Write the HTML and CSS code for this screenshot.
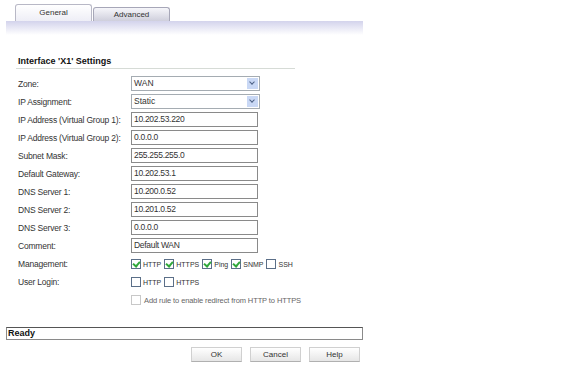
FILE: index.html
```html
<!DOCTYPE html>
<html lang="en">
<head>
    <meta charset="UTF-8">
    <title>Interface Settings</title>
    <link rel="stylesheet" href="styles.css">
</head>
<body>
    <div class="page">
        <div class="tabs">
            <div class="tab active">General</div>
            <div class="tab">Advanced</div>
        </div>
        <div class="band"></div>

        <div class="section">
            <h3>Interface 'X1' Settings</h3>
            <div class="form">
                <label>Zone:</label>
                <div class="select"><span>WAN</span><i class="arrow"></i></div>

                <label>IP Assignment:</label>
                <div class="select"><span>Static</span><i class="arrow"></i></div>

                <label>IP Address (Virtual Group 1):</label>
                <div class="field">10.202.53.220</div>

                <label>IP Address (Virtual Group 2):</label>
                <div class="field">0.0.0.0</div>

                <label>Subnet Mask:</label>
                <div class="field">255.255.255.0</div>

                <label>Default Gateway:</label>
                <div class="field">10.202.53.1</div>

                <label>DNS Server 1:</label>
                <div class="field">10.200.0.52</div>

                <label>DNS Server 2:</label>
                <div class="field">10.201.0.52</div>

                <label>DNS Server 3:</label>
                <div class="field">0.0.0.0</div>

                <label>Comment:</label>
                <div class="field">Default WAN</div>

                <label>Management:</label>
                <div class="checks">
                    <span class="check on"></span><span class="opt">HTTP</span>
                    <span class="check on"></span><span class="opt">HTTPS</span>
                    <span class="check on"></span><span class="opt">Ping</span>
                    <span class="check on"></span><span class="opt">SNMP</span>
                    <span class="check"></span><span class="opt">SSH</span>
                </div>

                <label>User Login:</label>
                <div class="checks">
                    <span class="check"></span><span class="opt">HTTP</span>
                    <span class="check"></span><span class="opt">HTTPS</span>
                </div>

                <label></label>
                <div class="checks disabled">
                    <span class="check"></span><span class="note">Add rule to enable redirect from HTTP to HTTPS</span>
                </div>
            </div>
        </div>

        <div class="status">Ready</div>
        <div class="buttons">
            <button>OK</button>
            <button>Cancel</button>
            <button>Help</button>
        </div>
    </div>
</body>
</html>
```

FILE: styles.css
```css
body {
    margin: 0;
    background-color: white;
    font-family: "Liberation Sans", Arial, sans-serif;
    font-size: 9px;
    color: #222;
}

.page {
    width: 357px;
    padding: 4px 0 0 6px;
}

.tabs {
    display: flex;
    align-items: flex-end;
    padding-left: 9px;
    height: 17px;
}

.tab {
    width: 75px;
    height: 13px;
    line-height: 13px;
    text-align: center;
    font-size: 8px;
    color: #333;
    border: 1px solid #a7a7b8;
    border-bottom: none;
    border-radius: 3px 3px 0 0;
    background: linear-gradient(#f6f6fa, #cfcfdc);
    margin-right: 1px;
}

.tab.active {
    height: 16px;
    line-height: 16px;
    background: linear-gradient(#ffffff, #eeeef6);
    border-color: #b8b8c6;
}

.band {
    height: 14px;
    background: linear-gradient(#d3d3ec, #ffffff);
}

.section {
    padding: 21px 0 0 10px;
}

h3 {
    margin: 0;
    width: 277px;
    font-size: 9px;
    font-weight: bold;
    color: #111;
    padding-bottom: 2px;
    border-bottom: 1px solid #d6dbd6;
    padding-left: 2px;
}

.form {
    display: grid;
    grid-template-columns: 113px 220px;
    grid-auto-rows: 18px;
    margin-top: 6px;
    padding-left: 2px;
}

.form label {
    display: flex;
    align-items: center;
    white-space: nowrap;
    font-size: 8.5px;
    letter-spacing: -0.2px;
    color: #333;
}

.field, .select {
    box-sizing: border-box;
    height: 15px;
    margin-top: 1px;
    width: 127px;
    border: 1px solid #8a8a8a;
    padding: 0 2px;
    line-height: 13px;
    font-size: 8.5px;
    letter-spacing: -0.3px;
    color: #333;
}

.select {
    width: 129px;
    display: flex;
    justify-content: space-between;
    border-color: #a5acb2;
    padding-right: 1px;
    letter-spacing: 0;
}

.arrow {
    width: 11px;
    height: 11px;
    margin-top: 1px;
    background: #c9d8f5;
    position: relative;
}

.arrow::after {
    content: "";
    position: absolute;
    left: 3px;
    top: 2px;
    width: 3px;
    height: 3px;
    border-right: 1px solid #4d6185;
    border-bottom: 1px solid #4d6185;
    transform: rotate(45deg);
}

.checks {
    display: flex;
    align-items: center;
    white-space: nowrap;
}

.check {
    flex-shrink: 0;
    box-sizing: border-box;
    width: 10px;
    height: 10px;
    border: 1px solid #5b6f88;
    background: white;
    position: relative;
}

.check.on::after {
    content: "";
    position: absolute;
    left: 2px;
    top: 0;
    width: 3px;
    height: 5px;
    border-right: 2px solid #2fa83a;
    border-bottom: 2px solid #2fa83a;
    transform: rotate(40deg);
}

.opt {
    font-size: 7px;
    margin: 0 3px 0 2px;
    color: #333;
}

.disabled .check {
    border-color: #c8c8c8;
}

.note {
    font-size: 7.5px;
    letter-spacing: -0.1px;
    color: #666;
    margin-left: 3px;
}

.status {
    box-sizing: border-box;
    margin-top: 18px;
    width: 357px;
    height: 13px;
    line-height: 11px;
    border: 1px solid #8a8a8a;
    border-top-color: #555;
    padding-left: 1px;
    font-weight: bold;
    font-size: 9px;
    color: #111;
}

.buttons {
    display: flex;
    justify-content: flex-end;
    gap: 8px;
    margin-top: 7px;
    padding-right: 3px;
}

.buttons button {
    width: 51px;
    height: 15px;
    padding: 0;
    font-family: "Liberation Sans", Arial, sans-serif;
    font-size: 8px;
    color: #333;
    border: 1px solid #d0d0d0;
    border-bottom-color: #b0b0b0;
    background: linear-gradient(#ffffff, #e6e6e6);
}
```
